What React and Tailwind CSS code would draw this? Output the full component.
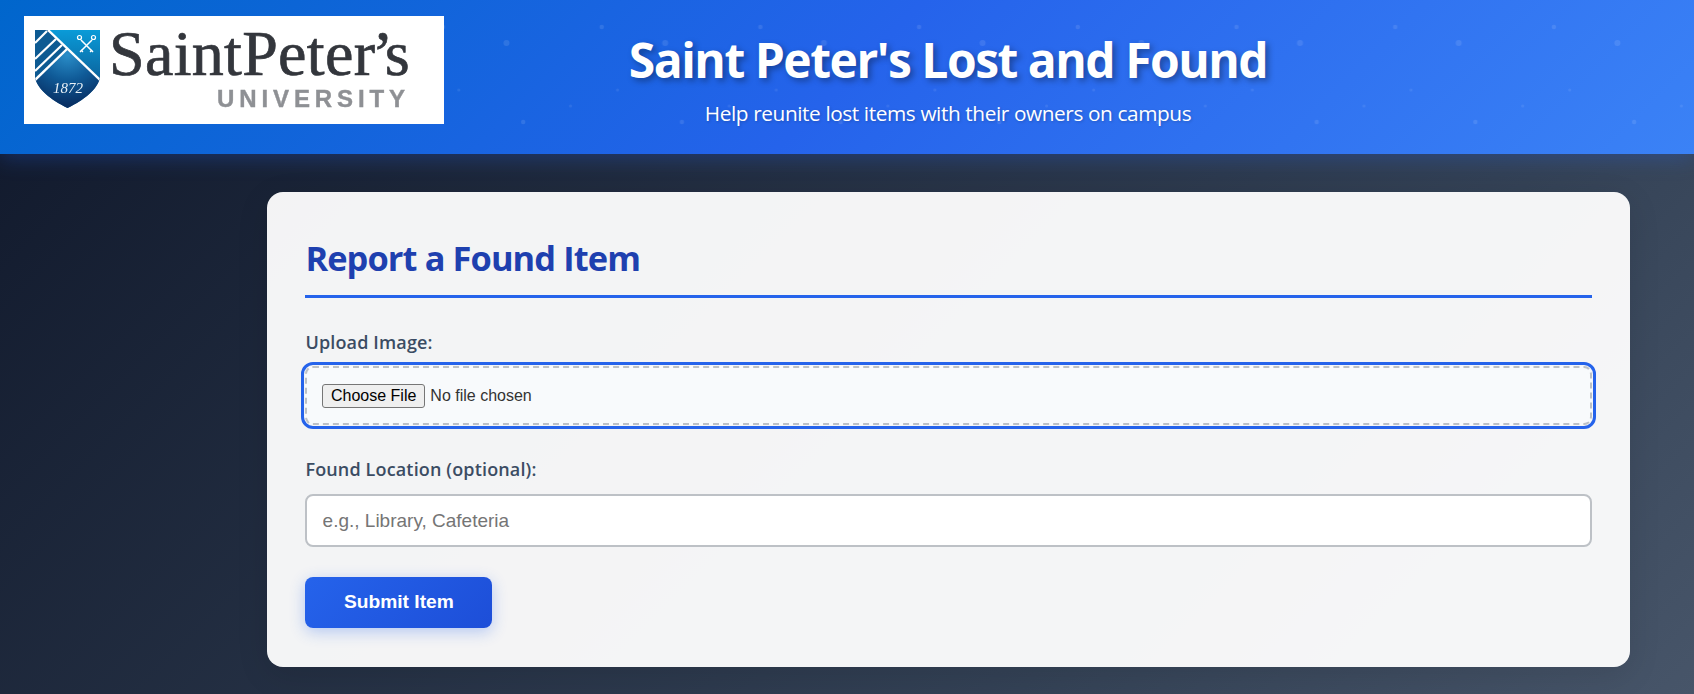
import React from 'react';

const Logo = () => (
  <svg viewBox="0 0 420 108" className="w-[420px] h-[108px] bg-white shrink-0 block blur-[0.35px]">
    <defs>
      <clipPath id="shield">
        <path d="M11 14H76V61C74 73 60 84 43.5 92C27 84 13 73 11 61Z" />
      </clipPath>
      <linearGradient id="sky" x1="0" y1="0" x2="0" y2="1">
        <stop offset="0" stopColor="#0a9bd8" />
        <stop offset="1" stopColor="#0b659f" />
      </linearGradient>
      <radialGradient id="dome" cx="0.5" cy="0.1" r="0.85">
        <stop offset="0" stopColor="#2a8ec9" />
        <stop offset="0.5" stopColor="#0f5a97" />
        <stop offset="1" stopColor="#082f63" />
      </radialGradient>
    </defs>
    <g clipPath="url(#shield)">
      <rect x="11" y="14" width="65" height="78" fill="#0d5a92" />
      <path d="M24 14H76V62Z" fill="url(#sky)" />
      <path d="M43 33L76 63V92H11V64Z" fill="url(#dome)" />
      <g stroke="#fff" fill="none">
        <path d="M24 14L76 64" strokeWidth="2.4" />
        <path d="M43 33L10 65" strokeWidth="2.4" />
        <path d="M11 27L23 15" strokeWidth="2.2" />
        <path d="M11 43L32 23" strokeWidth="2.2" />
        <path d="M11 55L38 29" strokeWidth="2.2" />
      </g>
      <g stroke="#fff" fill="none">
        <path d="M57 24L69 36M68 24L56 36" strokeWidth="1.5" />
        <circle cx="55.5" cy="21.5" r="2" strokeWidth="1.2" />
        <circle cx="69.5" cy="21.5" r="2" strokeWidth="1.2" />
        <path d="M66 36L68 34M59 36L57 34" strokeWidth="1.2" />
      </g>
    </g>
    <text x="44" y="77" textAnchor="middle" fill="#e8f0f6" fontSize="15" fontStyle="italic" fontFamily="Liberation Serif">1872</text>
    <g fill="#33363c" stroke="#33363c" strokeWidth="0.7" fontSize="64" fontFamily="Liberation Serif">
      <text x="85" y="59" textLength="266" lengthAdjust="spacing">SaintPeter</text>
      <text x="348" y="59" letterSpacing="-5">’s</text>
    </g>
    <text x="193" y="91" textLength="188" lengthAdjust="spacing" fill="#8e9094" stroke="#8e9094" strokeWidth="0.4" fontSize="24" fontWeight="700" fontFamily="Liberation Sans">UNIVERSITY</text>
  </svg>
);

const HeaderDots = () => (
  <svg className="absolute inset-0 w-full h-full pointer-events-none">
    <defs>
      <pattern id="dots" width="158.7" height="154" patternUnits="userSpaceOnUse">
        <circle cx="125.6" cy="27" r="2.2" fill="#fff" fillOpacity="0.1" />
        <circle cx="30.4" cy="43" r="3" fill="#fff" fillOpacity="0.1" />
        <circle cx="141.4" cy="90" r="1.5" fill="#fff" fillOpacity="0.08" />
        <circle cx="94.4" cy="106" r="1.5" fill="#fff" fillOpacity="0.08" />
        <circle cx="47.1" cy="122" r="2.2" fill="#fff" fillOpacity="0.1" />
      </pattern>
    </defs>
    <rect width="100%" height="100%" fill="url(#dots)" />
  </svg>
);

const App = () => {
  return (
    <div className="min-h-[694px] bg-[linear-gradient(135deg,#0f172a_0%,#334155_70%,#475569_100%)] font-['Liberation_Sans',sans-serif]">
      <header className="relative z-10 h-[154px] bg-[linear-gradient(135deg,#0066cc_0%,#2563eb_50%,#3b82f6_100%)] shadow-[0_4px_20px_rgba(37,99,235,0.3)]">
        <HeaderDots />
        <div className="relative flex items-start pl-6 pt-4">
          <Logo />
          <div className="w-[1008px] text-center text-white font-['Open_Sans',sans-serif]">
            <h1 className="mt-[11px] text-[48px] leading-[66px] font-bold tracking-[-1.5px] [text-shadow:3px_3px_6px_rgba(0,0,0,0.35)]">
              Saint Peter's Lost and Found
            </h1>
            <p className="mt-[6px] text-[20.8px] leading-[28px] tracking-[-0.4px] [text-shadow:1px_1px_3px_rgba(0,0,0,0.2)]">
              Help reunite lost items with their owners on campus
            </p>
          </div>
        </div>
      </header>

      <main className="pl-[267px] pr-[64px] pt-[38px] pb-[28px]">
        <div className="bg-white/95 rounded-2xl p-[38.4px] shadow-[0_8px_32px_rgba(0,0,0,0.1)]">
          <h2 className="text-[34.4px] leading-[48px] font-bold text-[#1e40af] tracking-[-0.9px] font-['Open_Sans',sans-serif] border-b-[3px] border-[#2563eb] mt-[4px] pb-[12.6px] mb-[32.4px]">
            Report a Found Item
          </h2>

          <form>
            <div className="mb-[32px]">
              <label className="block mb-[12px] text-[18px] leading-[24px] font-semibold text-[#3b4c63] tracking-[0.15px] font-['Open_Sans',sans-serif]">
                Upload Image:
              </label>
              <input
                type="file"
                className="block w-full text-base leading-[18.4px] text-[#333] py-[15.2px] px-[14.6px] bg-[#f8fafc] border-2 border-dashed border-[#bdc1c6] rounded-lg outline-3 outline-offset-1 outline-[#2563eb] file:mr-[5px] file:px-2 file:py-[2px] file:leading-[18.4px] file:text-black file:bg-[#efefef] file:border file:border-[#767676] file:rounded-[3px]"
              />
            </div>

            <div className="mb-[30px]">
              <label className="block mb-[13px] text-[18px] leading-[24px] font-semibold text-[#3b4c63] tracking-[0.15px] font-['Open_Sans',sans-serif]">
                Found Location (optional):
              </label>
              <input
                type="text"
                placeholder="e.g., Library, Cafeteria"
                className="block w-full h-[53px] text-[19px] leading-[22px] px-[15.2px] bg-white border-2 border-[#bdc1c6] rounded-lg placeholder:text-[#757575]"
              />
            </div>

            <button
              type="button"
              className="block w-[187px] h-[51px] rounded-lg text-[19.2px] font-bold text-white bg-[linear-gradient(135deg,#2563eb,#1d4ed8)] shadow-[0_4px_15px_rgba(37,99,235,0.3)]"
            >
              Submit Item
            </button>
          </form>
        </div>
      </main>
    </div>
  );
};

export default App;
